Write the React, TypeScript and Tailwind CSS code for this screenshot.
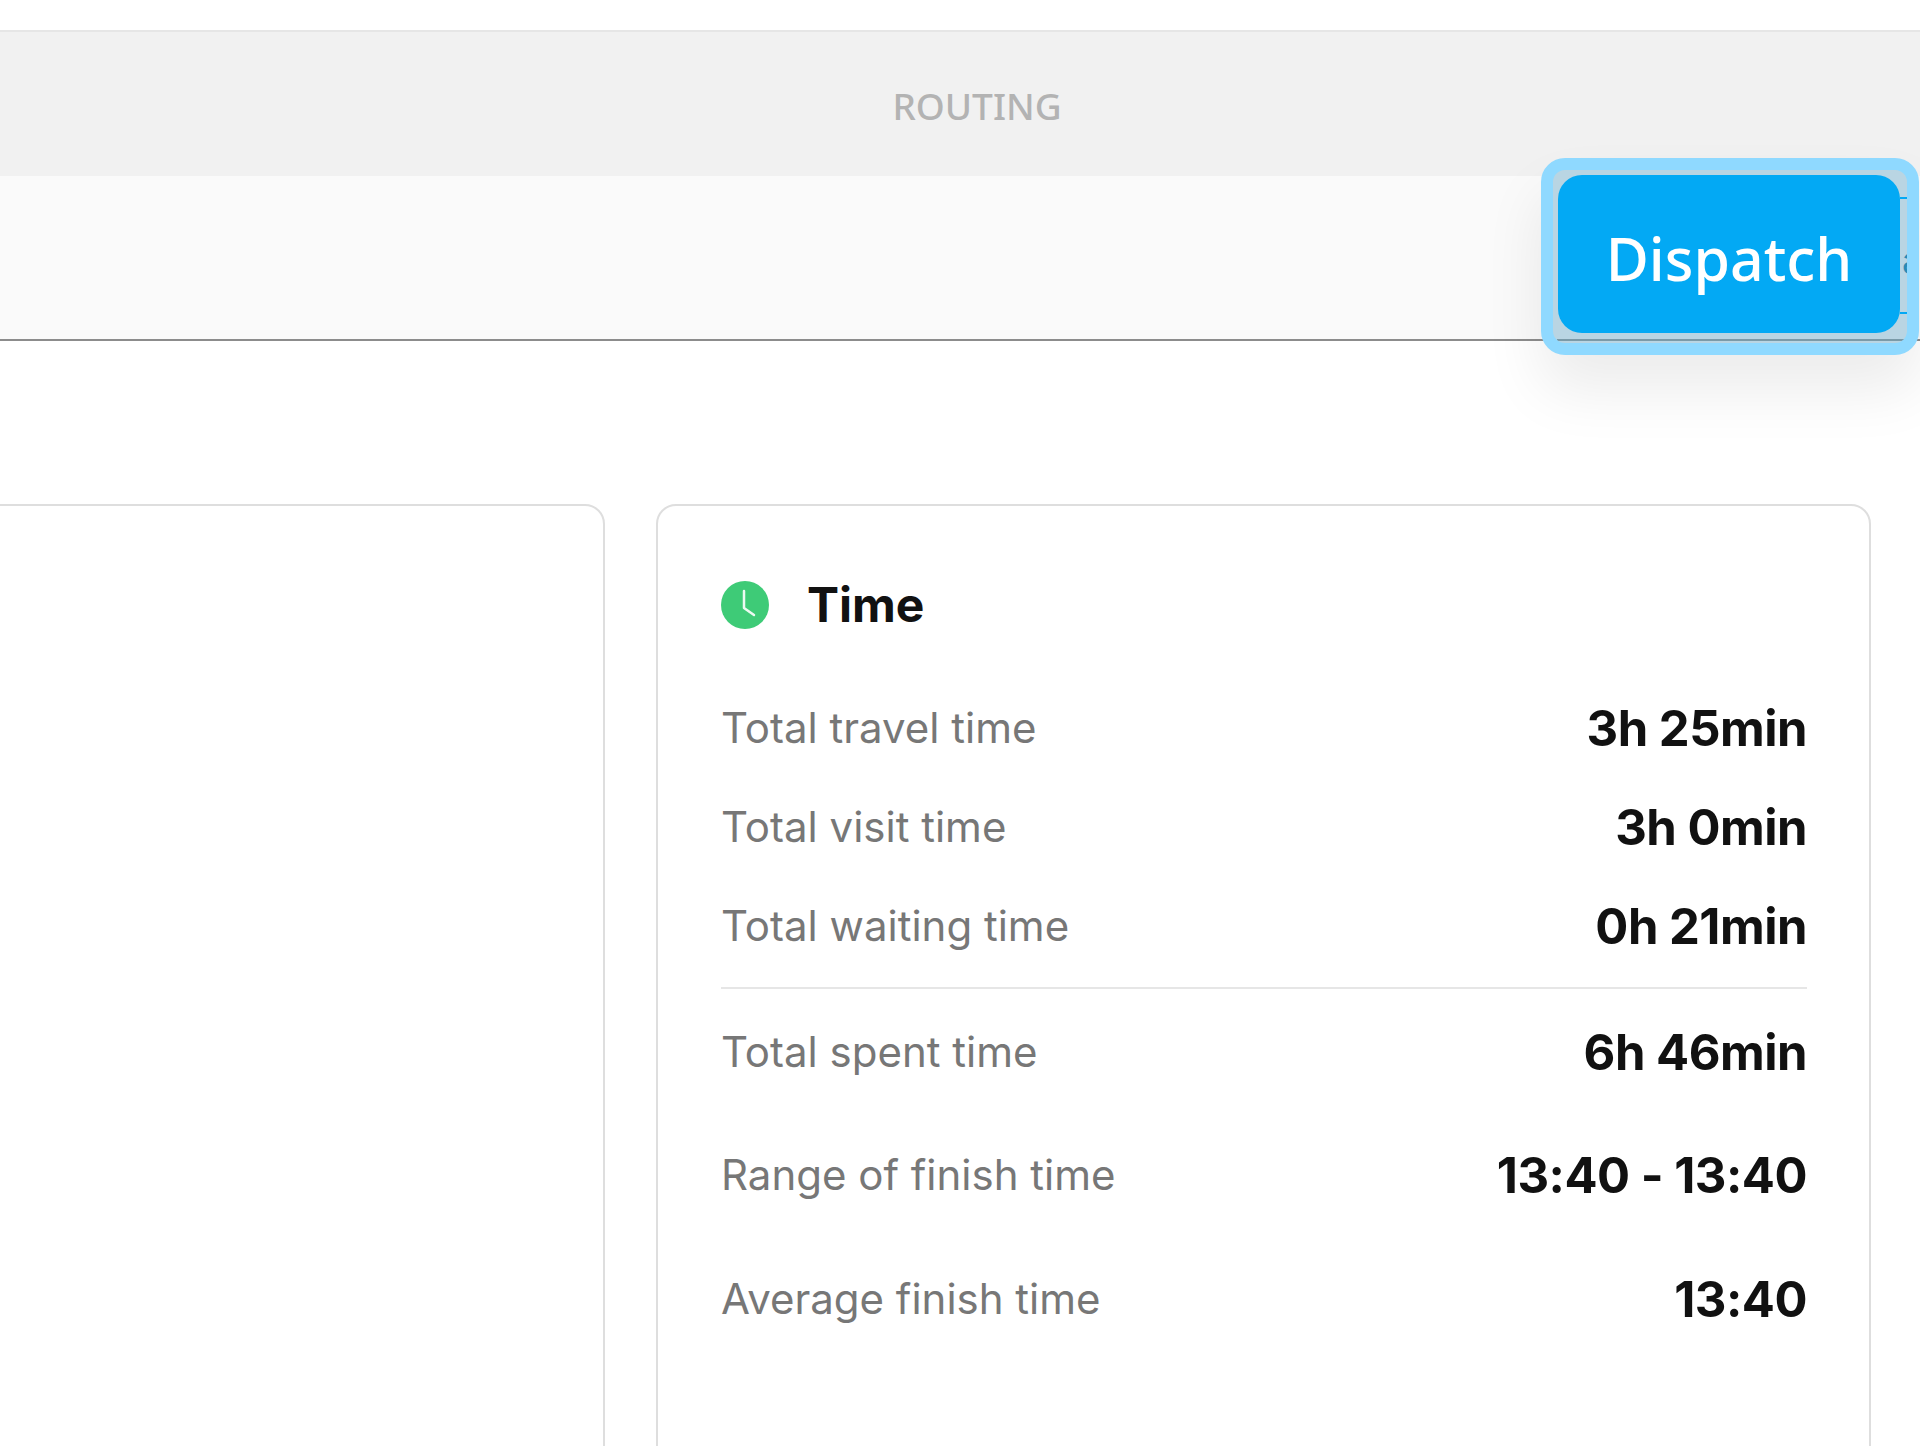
const sans = "font-['Inter','Liberation_Sans',sans-serif]";

const topRows = [
  { label: "Total travel time", value: "3h 25min" },
  { label: "Total visit time", value: "3h 0min" },
  { label: "Total waiting time", value: "0h 21min" },
];

const bottomRows = [
  { label: "Total spent time", value: "6h 46min", cls: "mt-[35px]" },
  { label: "Range of finish time", value: "13:40 - 13:40", cls: "mt-[67px]" },
  { label: "Average finish time", value: "13:40", cls: "mt-[68px]" },
];

function Row({ label, value, className }: { label: string; value: string; className?: string }) {
  return (
    <div className={`flex h-[56px] items-center justify-between ${className ?? ""}`}>
      <span className="text-[42px] leading-[56px] text-[#777777]">{label}</span>
      <span className="pt-[2px] text-[49px] leading-[56px] font-bold tracking-[-0.5px] text-[#111111]">{value}</span>
    </div>
  );
}

export default function App() {
  return (
    <div className={`relative h-[1446px] w-[1920px] overflow-hidden bg-white ${sans}`}>
      <div className="h-[30px]" />
      {/* Tabs */}
      <div className="flex h-[146px] items-center justify-center border-t-2 border-[#e6e6e6] bg-[#f1f1f1] pt-[4px] pl-[34px]">
        <span className="font-['Noto_Sans',sans-serif] text-[37px] font-medium text-[#b3b3b3]">ROUTING</span>
      </div>
      {/* Toolbar */}
      <div className="h-[165px] border-b-2 border-[#8c8c8c] bg-[#fafafa]" />

      {/* Highlighted button */}
      <div className="absolute top-[158px] left-[1541px] h-[197px] w-[378px] overflow-hidden rounded-[24px] border-[12px] border-[#8fd9ff] bg-[#b9d5e3] shadow-[0_35px_60px_rgba(0,0,0,0.08)]">
        <div className="absolute top-[27px] left-[347px] h-[2px] w-[7px] bg-[#03a9f4]" />
        <div className="absolute top-[142px] left-[347px] h-[2px] w-[7px] bg-[#03a9f4]" />
        <span className="absolute top-[70px] left-[349px] text-[36px] leading-[40px] text-[#2a8ab5]">a</span>
        <div className="absolute top-[169px] left-[4px] h-[2px] w-[349px] bg-[#7a9aa8]" />
        <button
          type="button"
          className="absolute top-[5px] left-[5px] flex h-[158px] w-[342px] items-center justify-center rounded-[24px] bg-[#03a9f4] pt-[9px] font-['Noto_Sans',sans-serif] text-[59px] font-medium text-white"
        >
          Dispatch
        </button>
      </div>

      <div className="mt-[163px] flex items-start">
        {/* Left card */}
        <div className="ml-[-20px] h-[1000px] w-[625px] rounded-[20px] border-2 border-[#dedede]" />
        {/* Time card */}
        <div className="ml-[51px] h-[1000px] w-[1215px] rounded-[20px] border-2 border-[#dedede] pt-[71px] pr-[62px] pl-[63px]">
          <div className="flex items-center">
            <svg width="48" height="48" viewBox="0 0 48 48" className="shrink-0">
              <circle cx="24" cy="24" r="24" fill="#3ecb77" />
              <path d="M23 10v17l10 7" fill="none" stroke="#ffffff" strokeWidth="2.5" strokeLinecap="round" strokeLinejoin="round" opacity="0.9" />
            </svg>
            <span className="ml-[38px] text-[48px] leading-[56px] font-bold text-[#111111]">Time</span>
          </div>
          <div className="mt-[67px] flex flex-col gap-[43px]">
            {topRows.map((r) => (
              <Row key={r.label} label={r.label} value={r.value} />
            ))}
          </div>
          <div className="mt-[33px] h-[2px] bg-[#e6e6e6]" />
          {bottomRows.map((r) => (
            <Row key={r.label} label={r.label} value={r.value} className={r.cls} />
          ))}
        </div>
      </div>
    </div>
  );
}
